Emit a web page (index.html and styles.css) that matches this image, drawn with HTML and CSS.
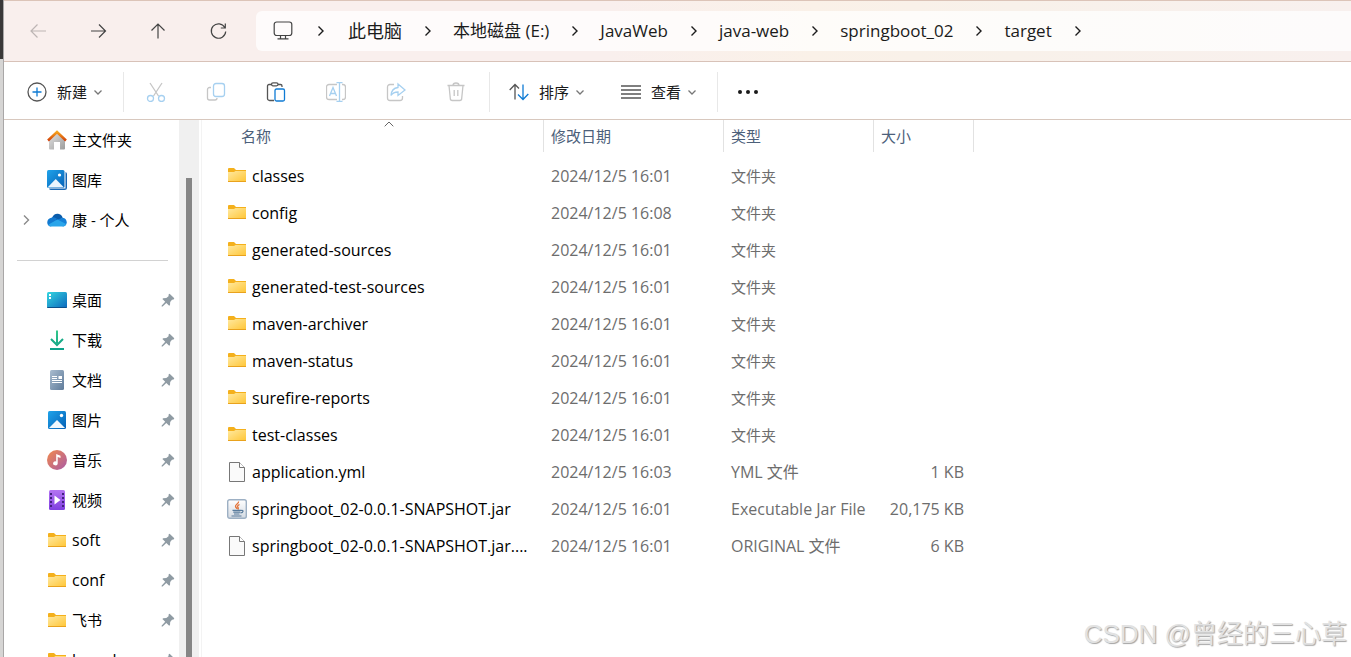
FILE: index.html
```html
<!DOCTYPE html>
<html lang="zh-CN">
<head>
<meta charset="utf-8">
<title>target</title>
<link rel="stylesheet" href="styles.css">
</head>
<body>
<svg class="sprite" aria-hidden="true">
  <defs>
    <linearGradient id="g-folder" x1="0" y1="0" x2="1" y2="1"><stop offset="0" stop-color="#ffe9a0"/><stop offset="1" stop-color="#ffc637"/></linearGradient>
    <linearGradient id="g-photo" x1="0" y1="0" x2="1" y2="1"><stop offset="0" stop-color="#1fa3ea"/><stop offset="1" stop-color="#0560b6"/></linearGradient>
    <linearGradient id="g-roof" x1="0" y1="0" x2="0" y2="1"><stop offset="0" stop-color="#f6a21c"/><stop offset="1" stop-color="#d2430b"/></linearGradient>
    <linearGradient id="g-wall" x1="0" y1="0" x2="1" y2="1"><stop offset="0" stop-color="#e4e4e4"/><stop offset="1" stop-color="#9c9c9c"/></linearGradient>
    <linearGradient id="g-desk" x1="0" y1="0" x2="1" y2="1"><stop offset="0" stop-color="#35d6e0"/><stop offset="1" stop-color="#0b67bd"/></linearGradient>
    <linearGradient id="g-down" x1="0" y1="0" x2="0" y2="1"><stop offset="0" stop-color="#35c88a"/><stop offset="1" stop-color="#0aa08a"/></linearGradient>
    <linearGradient id="g-doc" x1="0" y1="0" x2="1" y2="1"><stop offset="0" stop-color="#a9bccf"/><stop offset="1" stop-color="#5f7b9a"/></linearGradient>
    <linearGradient id="g-music" x1="0" y1="0" x2="1" y2="1"><stop offset="0" stop-color="#f28a4c"/><stop offset="1" stop-color="#a95aa6"/></linearGradient>
    <linearGradient id="g-video" x1="0" y1="0" x2="0" y2="1"><stop offset="0" stop-color="#b474f2"/><stop offset="1" stop-color="#7f3fe0"/></linearGradient>
    <linearGradient id="g-jar" x1="0" y1="0" x2="0" y2="1"><stop offset="0" stop-color="#ffffff"/><stop offset="1" stop-color="#d3dae2"/></linearGradient>
    <symbol id="folder" viewBox="0 0 20 20"><path d="M1 3Q1 2 2 2h5l2 2h10v4H1z" fill="#f4b01c"/><path d="M1 6h6l1.500-1H19v10.500H1z" fill="url(#g-folder)"/><path d="M1 15.500h18" stroke="#e9a21d"/></symbol>
    <symbol id="file" viewBox="0 0 20 20"><path d="M2.500 .5h10l5 5v14h-15z" fill="#fafafa" stroke="#777"/><path d="M12.500.5v5h5" fill="#fff" stroke="#777"/></symbol>
    <symbol id="jar" viewBox="0 0 20 20"><rect x=".7" y=".7" width="18.600" height="18.600" rx="2" fill="url(#g-jar)" stroke="#9db0c4" stroke-width="1.400"/><path d="M11.500 2.500c.8 2-3.500 3-3 5 .2 1 1.500 1.500 1.500 2.500M12.500 5.500c-2 1-2.500 2-1.500 3 .6.700.3 1.500-.3 2" fill="none" stroke="#e3743a" stroke-width="1.300"/><path d="M5.500 11.300h8.500M6.300 13.200h7M7 15h5.500M14 11.500c3-.8 2.500 2.300-.5 2.500M4.500 17h10" fill="none" stroke="#587b9c" stroke-width="1.200"/></symbol>
    <symbol id="pin" viewBox="0 0 14 14"><path d="M8.600.7 13.300 5.300 12.600 6.400 11 6.700 9.200 9 9 12 8.200 12.800 5.300 10 1.600 13.500.6 13.500.7 12.500 4.200 8.800 1.400 6 2.200 5.200 5.300 5 7.500 3.200 7.700 1.300z" fill="#8f9ba3"/></symbol>
    <symbol id="chev-r" viewBox="0 0 12 12"><path d="M4 1.500 8.500 6 4 10.500" fill="none" stroke="currentColor" stroke-width="1.400"/></symbol>
    <symbol id="chev-d" viewBox="0 0 10 10"><path d="M1.500 3.500 5 7l3.500-3.500" fill="none" stroke="currentColor"/></symbol>
  </defs>
</svg>
<div class="screen">
  <div class="behind"></div>
  <div class="window">
    <header class="titlebar">
      <nav class="nav">
        <button class="nav-btn off" aria-label="后退"><svg class="i20" viewBox="0 0 20 20"><path d="M18 10H3M9.500 3.500 3 10l6.500 6.500"/></svg></button>
        <button class="nav-btn" aria-label="前进"><svg class="i20" viewBox="0 0 20 20"><path d="M3 10h14.500M11 3.500l6.500 6.500-6.500 6.500"/></svg></button>
        <button class="nav-btn" aria-label="向上"><svg class="i20" viewBox="0 0 20 20"><path d="M10 17.500V3M3.500 9.500 10 3l6.500 6.500"/></svg></button>
        <button class="nav-btn" aria-label="刷新"><svg class="i20" viewBox="0 0 20 20"><path d="M16.800 6.500A7.200 7.200 0 1 0 17.700 10.500M17.300 2.500v4.500h-4.500"/></svg></button>
      </nav>
      <div class="address">
        <button class="crumb pc" aria-label="位置"><svg class="i20" viewBox="0 0 20 20"><rect x="1.200" y="1" width="17.600" height="13.500" rx="2.500"/><path d="M7.500 14.500v3M12.500 14.500v3M4.500 17.800h11"/></svg></button>
        <svg class="sep first"><use href="#chev-r"/></svg>
        <button class="crumb root">此电脑</button><svg class="sep"><use href="#chev-r"/></svg>
        <button class="crumb">本地磁盘 (E:)</button><svg class="sep"><use href="#chev-r"/></svg>
        <button class="crumb">JavaWeb</button><svg class="sep"><use href="#chev-r"/></svg>
        <button class="crumb">java-web</button><svg class="sep"><use href="#chev-r"/></svg>
        <button class="crumb">springboot_02</button><svg class="sep"><use href="#chev-r"/></svg>
        <button class="crumb">target</button><svg class="sep"><use href="#chev-r"/></svg>
      </div>
    </header>
    <div class="toolbar">
      <div class="group new">
        <button class="tool"><svg class="i20" viewBox="0 0 20 20"><circle cx="10" cy="10" r="9"/><path class="blue" d="M10 5.500v9M5.500 10h9"/></svg>新建<svg class="down"><use href="#chev-d"/></svg></button>
      </div>
      <div class="group icons">
        <button class="tool-icon off" aria-label="剪切"><svg class="i20" viewBox="0 0 20 20"><path d="M4 1l8.500 13M16 1 7.500 14"/><circle class="blue" cx="4.500" cy="16.500" r="3"/><circle class="blue" cx="15.500" cy="16.500" r="3"/></svg></button>
        <button class="tool-icon off" aria-label="复制"><svg class="i20" viewBox="0 0 20 20"><path d="M5 5.500H3.500a2 2 0 0 0-2 2V16a2 2 0 0 0 2 2H9a2 2 0 0 0 2-2"/><rect class="blue" x="7.500" y="1.500" width="11" height="13" rx="2.500"/></svg></button>
        <button class="tool-icon" aria-label="粘贴"><svg class="i20" viewBox="0 0 20 20"><path d="M8 18.500H3.500a2 2 0 0 1-2-2V4a1.500 1.500 0 0 1 1.500-1.500h2.500M12 2.500h2.500A1.500 1.500 0 0 1 16 4v1"/><rect x="5.500" y=".8" width="6.500" height="3" rx="1.500"/><rect class="blue" x="9" y="7" width="9.500" height="12" rx="1.500"/></svg></button>
        <button class="tool-icon off" aria-label="重命名"><svg class="i20" viewBox="0 0 20 20"><path d="M11 2.500H3a2.500 2.500 0 0 0-2.500 2.500v10A2.500 2.500 0 0 0 3 17.500h8M16 2.500h1A2.500 2.500 0 0 1 19.500 5v10a2.500 2.500 0 0 1-2.500 2.500h-1"/><path class="blue" d="M3.500 14 7 5.500 10.500 14M4.800 11.500h4.400M13.500.5v19M10.500.5h6M10.500 19.500h6"/></svg></button>
        <button class="tool-icon off" aria-label="共享"><svg class="i20" viewBox="0 0 20 20"><path d="M8 2.500H4A2.500 2.500 0 0 0 1.500 5v11A2.500 2.500 0 0 0 4 18.500h10a2.500 2.500 0 0 0 2.500-2.500v-2"/><path class="blue" d="M12 2l7 6-7 5.500V10C8.500 10 6.500 11 5 13.500 5.300 8.500 8 6 12 5.500z"/></svg></button>
        <button class="tool-icon off" aria-label="删除"><svg class="i20" viewBox="0 0 20 20"><path d="M1.500 3.500h17M7 3.500a3 2.500 0 0 1 6 0M3 3.500l1.300 13a2 2 0 0 0 2 2h7.400a2 2 0 0 0 2-2L17 3.500M8.200 8v6M11.800 8v6"/></svg></button>
      </div>
      <div class="group arrange">
        <button class="tool"><svg class="i20" viewBox="0 0 20 20"><path d="M6 17.500V2.500M.7 8 6 2.500 10 6.500"/><path class="blue" d="M14 2.500v15M9 12.500l5 5 5.300-5.500"/></svg>排序<svg class="down"><use href="#chev-d"/></svg></button>
        <button class="tool"><svg class="i20" viewBox="0 0 20 20"><path d="M0 4h20M0 8h20M0 12h20M0 16h20"/></svg>查看<svg class="down"><use href="#chev-d"/></svg></button>
      </div>
      <button class="tool-icon more" aria-label="更多"><svg class="i22" viewBox="0 0 22 22"><circle cx="3" cy="11" r="2"/><circle cx="11" cy="11" r="2"/><circle cx="19" cy="11" r="2"/></svg></button>
    </div>
    <div class="body">
      <aside class="side">
        <ul class="tree">
          <li><a href="#"><svg class="i20" viewBox="0 0 20 20"><path d="M2 9l8-7 8 7v9.500q0 1-1 1h-4V12H7v7.500H3q-1 0-1-1z" fill="url(#g-wall)"/><path d="M1 10.500 10 2l9 8.500" fill="none" stroke="url(#g-roof)" stroke-width="2.500"/></svg><span>主文件夹</span></a></li>
          <li><a href="#"><svg class="i20" viewBox="0 0 20 20"><path d="M2 18.500q.5 1.500 2 1.500h13.500q2.500 0 2.500-2.500V4q0-1.700-1.500-2v16.500z" fill="#1766b4"/><rect width="17.500" height="18" rx="1.500" fill="url(#g-photo)"/><path d="M.5 17.500 8.700 9l8.300 8.500z" fill="#e9f4fd"/><circle cx="12.500" cy="5" r="1.600" fill="#fff"/></svg><span>图库</span></a></li>
          <li><svg class="expand"><use href="#chev-r"/></svg><a href="#"><svg class="i20" viewBox="0 0 20 20"><path d="M5 8c1-3 3.500-4.500 6-4.200 2.500.2 4 2 4.700 4L10 12z" fill="#0a5cab"/><path d="M5 7.500c2-.5 4 .5 5 1.500l-6 7.500c-5-.3-5.300-8 1-9z" fill="#1279d0"/><path d="M15.700 7.800c5.300.2 5.300 8.700.3 8.700l-8-6z" fill="#1480d8"/><path d="M1.500 14.500 10.500 9.500l8.500 4.500c-.5 1.500-1.500 2.500-3 2.500H4c-1 0-2-.8-2.500-2z" fill="#2aa5ea"/></svg><span>康 - 个人</span></a></li>
        </ul>
        <hr class="rule">
        <ul class="tree">
          <li><a href="#"><svg class="i20" viewBox="0 0 20 20"><rect y="2" width="20" height="16" rx="1.500" fill="url(#g-desk)"/><path d="M0 17h20q0 1-1 1H1q-1 0-1-1z" fill="#0b4f8a"/><path d="M2 4h2v2H2zM2 7h2v2H2z" fill="#fff"/></svg><span>桌面</span></a><svg class="pin"><use href="#pin"/></svg></li>
          <li><a href="#"><svg class="i20" viewBox="0 0 20 20"><path d="M9 .5h2v13H9zM3 18h14v2H3z" fill="url(#g-down)"/><path d="M4 9l6 6 6-6" fill="none" stroke="#16ab86" stroke-width="2"/></svg><span>下载</span></a><svg class="pin"><use href="#pin"/></svg></li>
          <li><a href="#"><svg class="i20" viewBox="0 0 20 20"><rect x="3" width="14" height="20" rx="1.500" fill="url(#g-doc)"/><path d="M5 6.500h5M5 8.500h5M5 10.500h10M5 12.500h10" stroke="#fff"/><path d="M11.500 6h3.500v3h-3.500z" fill="#fff"/></svg><span>文档</span></a><svg class="pin"><use href="#pin"/></svg></li>
          <li><a href="#"><svg class="i20" viewBox="0 0 20 20"><rect x="1" y="1" width="18" height="18" rx="1.500" fill="url(#g-photo)"/><path d="M2 18 10 10l8 8z" fill="#f1f8fe"/><circle cx="14.500" cy="5.500" r="1.700" fill="#fff"/></svg><span>图片</span></a><svg class="pin"><use href="#pin"/></svg></li>
          <li><a href="#"><svg class="i20" viewBox="0 0 20 20"><circle cx="10" cy="10" r="10" fill="url(#g-music)"/><path d="M9.200 4l4.300 1.800v2.200L10.700 7v6.500a2.300 2 0 1 1-1.500-2z" fill="#fff"/></svg><span>音乐</span></a><svg class="pin"><use href="#pin"/></svg></li>
          <li><a href="#"><svg class="i20" viewBox="0 0 20 20"><rect x="2" width="16" height="20" rx="1.500" fill="url(#g-video)"/><path d="M4 3v15M16 3v15" stroke="#43217f" stroke-width="2" stroke-dasharray="2 2"/><path d="M7.500 5.500 13.500 10l-6 4.500z" fill="#fff"/></svg><span>视频</span></a><svg class="pin"><use href="#pin"/></svg></li>
          <li><a href="#"><svg class="i20" viewBox="0 -1 20 20"><use href="#folder" width="20" height="20"/></svg><span class="latin">soft</span></a><svg class="pin"><use href="#pin"/></svg></li>
          <li><a href="#"><svg class="i20" viewBox="0 -1 20 20"><use href="#folder" width="20" height="20"/></svg><span class="latin">conf</span></a><svg class="pin"><use href="#pin"/></svg></li>
          <li><a href="#"><svg class="i20" viewBox="0 -1 20 20"><use href="#folder" width="20" height="20"/></svg><span>飞书</span></a><svg class="pin"><use href="#pin"/></svg></li>
          <li><a href="#"><svg class="i20" viewBox="0 -1 20 20"><use href="#folder" width="20" height="20"/></svg><span class="latin">board</span></a><svg class="pin"><use href="#pin"/></svg></li>
        </ul>
      </aside>
      <div class="track"><div class="thumb"></div></div>
      <main class="files">
        <table class="list">
          <colgroup><col class="c-name"><col class="c-date"><col class="c-type"><col class="c-size"></colgroup>
          <thead><tr>
            <th><button class="head name">名称<svg class="sort" viewBox="0 0 10 6"><path d="M.7 5.300 5 1l4.300 4.300"/></svg></button></th>
            <th><button class="head">修改日期</button></th><th><button class="head">类型</button></th><th><button class="head">大小</button></th>
          </tr></thead>
          <tbody>
            <tr><td><div class="fname"><svg class="i20"><use href="#folder"/></svg><span>classes</span></div></td><td>2024/12/5 16:01</td><td class="cjk">文件夹</td><td></td></tr>
            <tr><td><div class="fname"><svg class="i20"><use href="#folder"/></svg><span>config</span></div></td><td>2024/12/5 16:08</td><td class="cjk">文件夹</td><td></td></tr>
            <tr><td><div class="fname"><svg class="i20"><use href="#folder"/></svg><span>generated-sources</span></div></td><td>2024/12/5 16:01</td><td class="cjk">文件夹</td><td></td></tr>
            <tr><td><div class="fname"><svg class="i20"><use href="#folder"/></svg><span>generated-test-sources</span></div></td><td>2024/12/5 16:01</td><td class="cjk">文件夹</td><td></td></tr>
            <tr><td><div class="fname"><svg class="i20"><use href="#folder"/></svg><span>maven-archiver</span></div></td><td>2024/12/5 16:01</td><td class="cjk">文件夹</td><td></td></tr>
            <tr><td><div class="fname"><svg class="i20"><use href="#folder"/></svg><span>maven-status</span></div></td><td>2024/12/5 16:01</td><td class="cjk">文件夹</td><td></td></tr>
            <tr><td><div class="fname"><svg class="i20"><use href="#folder"/></svg><span>surefire-reports</span></div></td><td>2024/12/5 16:01</td><td class="cjk">文件夹</td><td></td></tr>
            <tr><td><div class="fname"><svg class="i20"><use href="#folder"/></svg><span>test-classes</span></div></td><td>2024/12/5 16:01</td><td class="cjk">文件夹</td><td></td></tr>
            <tr><td><div class="fname"><svg class="i20"><use href="#file"/></svg><span>application.yml</span></div></td><td>2024/12/5 16:03</td><td>YML 文件</td><td>1 KB</td></tr>
            <tr><td><div class="fname"><svg class="i20"><use href="#jar"/></svg><span>springboot_02-0.0.1-SNAPSHOT.jar</span></div></td><td>2024/12/5 16:01</td><td>Executable Jar File</td><td>20,175 KB</td></tr>
            <tr><td><div class="fname"><svg class="i20"><use href="#file"/></svg><span>springboot_02-0.0.1-SNAPSHOT.jar....</span></div></td><td>2024/12/5 16:01</td><td>ORIGINAL 文件</td><td>6 KB</td></tr>
          </tbody>
        </table>
      </main>
    </div>
  </div>
  <div class="watermark">CSDN @曾经的三心草</div>
</div>
</body>
</html>
```
FILE: styles.css
```css
* { box-sizing: border-box; }
body { margin: 0; font: 15px/20px "Open Sans", "Noto Sans CJK SC", sans-serif; color: #000; background: #fff; }
button { font: inherit; color: inherit; background: none; border: 0; padding: 0; white-space: nowrap; }
a { color: inherit; text-decoration: none; }
svg { display: block; flex: none; }
.sprite { position: absolute; width: 0; height: 0; }
.screen { position: relative; display: flex; height: 100vh; overflow: hidden; }
.behind { width: 4px; flex: none; background: linear-gradient(#3a3838 59px, #d6d5d4 59px); border-right: 1px solid #a9a7a7; }
.window { flex: 1; min-width: 0; display: flex; flex-direction: column; background: #fff; }
.i20 { width: 20px; height: 20px; }
.i22 { width: 22px; height: 22px; }
.latin { font-size: 16px; }

.titlebar { display: flex; align-items: center; gap: 8px; height: 62px; flex: none; padding-left: 4px; border-top: 1px solid #dcc4b8; border-bottom: 1px solid #d8c2b8; background: linear-gradient(90deg, #f9efed 0%, #f9efed 45%, #faf1e8 60%, #f8f1ea 75%, #f8f0ee 100%); }
.nav { display: flex; }
.nav-btn { width: 60px; height: 40px; display: grid; place-items: center; color: #444; }
.nav-btn svg, .pc svg { fill: none; stroke: currentColor; stroke-width: 1.2; }
.nav-btn.off { color: #bdb5b4; }
.address { flex: 1; display: flex; align-items: center; height: 40px; padding-left: 17px; border-radius: 6px 0 0 6px; background: rgba(255, 255, 255, .75); font-size: 17px; line-height: 24px; color: #1b1b1b; }
.pc { color: #444; }
.root { font-size: 18px; }
.sep { width: 51px; height: 12px; }
.sep.first { width: 55px; }

.toolbar { display: flex; align-items: center; height: 58px; flex: none; padding-top: 2px; border-bottom: 1px solid #d8c8be; }
.group { display: flex; align-items: center; height: 40px; border-right: 1px solid #e8e8e8; }
.tool { display: flex; align-items: center; gap: 10px; color: #1a1a1a; }
.tool svg, .tool-icon svg { fill: none; stroke: #555; stroke-width: 1.3; }
.tool .blue, .tool-icon .blue { stroke: #0f7bd4; }
.tool-icon { width: 60px; height: 40px; display: grid; place-items: center; }
.tool-icon.off svg { stroke: #c6c6c6; }
.tool-icon.off .blue { stroke: #a6d0f0; }
.tool .down { width: 10px; height: 10px; color: #777; margin-left: -4px; stroke: none; }
.new { padding: 0 20px 0 23px; }
.icons { padding: 0 3px 0 2px; }
.arrange { padding: 0 20px 0 19px; gap: 36px; }
.tool-icon.more svg { fill: #1a1a1a; stroke: none; }

.body { flex: 1; min-height: 0; display: flex; overflow: hidden; }
.side { width: 175px; flex: none; overflow: hidden; }
.tree { list-style: none; margin: 0; padding: 0 4px 0 12px; }
.tree li { position: relative; display: flex; align-items: center; justify-content: space-between; height: 40px; padding-left: 31px; }
.tree a { display: flex; align-items: center; gap: 5px; }
.tree .pin { width: 14px; height: 14px; }
.expand { position: absolute; left: 4px; top: 14px; width: 12px; height: 12px; color: #8a8a8a; }
.rule { height: 1px; margin: 20px 11px 19px 13px; border: 0; background: #d2d2d2; }
.track { width: 20px; flex: none; padding: 58px 7px 0; background: #f0f0f0; }
.thumb { width: 6px; height: 100%; background: #868686; }
.files { flex: 1; min-width: 0; margin-left: 2px; border-left: 1px solid #f3f3f3; }

.list { table-layout: fixed; width: 772px; border-collapse: collapse; font-size: 16px; color: #6d6d6d; }
.c-name { width: 342px; }
.c-date { width: 180px; }
.c-type { width: 150px; }
.c-size { width: 100px; }
.list th { padding: 0 0 5px; font-weight: 400; }
.head { position: relative; display: flex; align-items: center; width: 100%; height: 32px; padding-left: 7px; border-right: 1px solid #e2e2e2; font-size: 15px; color: #4c607a; }
.head.name { padding-left: 39px; }
.sort { position: absolute; left: 182px; top: 1px; width: 10px; height: 6px; fill: none; stroke: #666; }
.list td { height: 37px; padding: 0 10px 0 7px; white-space: nowrap; }
.list td:first-child { padding: 0 0 0 25px; }
.list td:last-child { text-align: right; }
.list .cjk { font-size: 15px; }
.fname { display: flex; align-items: center; gap: 5px; color: #000; }
.watermark { position: absolute; right: 4px; bottom: 8px; font: 26px/30px "Liberation Sans", "Noto Sans CJK SC", sans-serif; color: #e2e2e2; text-shadow: 1px 1px 1px #a4a4a4; }
```
